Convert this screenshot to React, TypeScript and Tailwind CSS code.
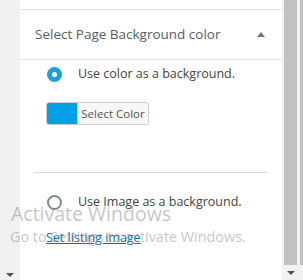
// Customizer-style panel: page background color options

const font = { fontFamily: '"Open Sans", "Liberation Sans", sans-serif' };

const Radio = ({ checked }: { checked: boolean }) =>
  checked ? (
    <span className="block w-[15px] h-[15px] rounded-full border-[5px] border-[#1e9fd6] bg-white shrink-0" />
  ) : (
    <span className="block w-[15px] h-[15px] rounded-full border-2 border-[#7e8993] bg-white shrink-0" />
  );

const Arrow = () => (
  <span className="block w-0 h-0 border-l-[4px] border-r-[4px] border-t-[4px] border-l-transparent border-r-transparent border-t-[#505050]" />
);

export default function App() {
  return (
    <div className="relative w-[303px] h-[280px] flex bg-[#f1f1f1] overflow-hidden" style={font}>
      {/* left gutter */}
      <div className="w-[20px] flex flex-col justify-end items-center pb-[3px]">
        <Arrow />
      </div>

      {/* panel */}
      <div className="w-[262px] bg-white flex flex-col">
        <div className="h-[10px] border-b border-[#e2e4e7]" />
        <div className="h-[50px] border-b border-[#e2e4e7] flex items-center justify-between pl-[15px] pr-[17px]">
          <span className="text-[13.5px] text-[#555d66]">Select Page Background color</span>
          <span className="block w-0 h-0 border-l-[4px] border-r-[4px] border-b-[5px] border-l-transparent border-r-transparent border-b-[#72777c]" />
        </div>

        <div className="pt-[7px] pl-[27px] pr-[14px]">
          <label className="flex items-center gap-[16px] h-[15px]">
            <Radio checked />
            <span className="text-[12.5px] text-[#444]">Use color as a background.</span>
          </label>

          <div className="mt-[20px] ml-[-1px] flex w-[103px] h-[23px] border border-[#ccc] rounded-[3px] overflow-hidden">
            <span className="w-[30px] bg-[#00a0e6]" />
            <span className="flex-1 bg-[#f7f7f7] border-l border-[#ccc] flex items-center justify-center text-[11.5px] text-[#555]">
              Select Color
            </span>
          </div>

          <div className="mt-[47px] ml-[-13px] mr-0 border-t border-[#dcdcde]" />

          <label className="mt-[22px] flex items-center gap-[16px] h-[15px]">
            <Radio checked={false} />
            <span className="text-[12.5px] text-[#444]">Use Image as a background.</span>
          </label>

          <a className="block mt-[20px] ml-[-1px] text-[12.5px] text-[#0073aa] underline leading-[16px]">Set listing image</a>
        </div>
      </div>

      {/* scrollbar */}
      <div className="w-[21px] flex">
        <div className="w-[2px] bg-[#f1f1f1]" />
        <div className="w-[13px] flex flex-col">
          <div className="h-[265px] bg-[#c1c1c1]" />
          <div className="flex-1 flex items-center justify-center">
            <Arrow />
          </div>
        </div>
        <div className="w-[3px] bg-[#f1f1f1]" />
        <div className="w-[3px] h-[265px] bg-[#c1c1c1]" />
      </div>

      {/* activation watermark */}
      <div className="absolute left-[11px] top-[201px] pointer-events-none text-[rgba(140,140,140,0.5)]">
        <div className="text-[19.5px] leading-[26px]">Activate Windows</div>
        <div className="text-[14.4px] leading-[18px] mt-[1px] -ml-[1px]">Go to Settings to activate Windows.</div>
      </div>
    </div>
  );
}
